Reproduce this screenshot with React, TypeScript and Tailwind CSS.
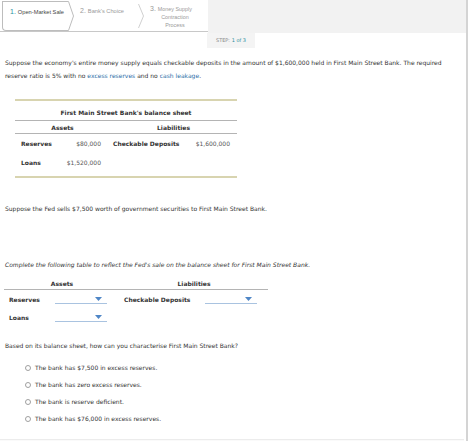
import React from "react";

function Dropdown() {
  return (
    <div className="flex h-[9px] w-[52px] items-center justify-end border-b border-[#a9c3e0] pr-[5px]">
      <svg width="7" height="4" viewBox="0 0 7 4">
        <path d="M0 0 L7 0 L3.5 4 Z" fill="#4f86c6" />
      </svg>
    </div>
  );
}

function Radio({ text }: { text: string }) {
  return (
    <div className="flex h-[17px] items-center gap-[4px]">
      <span className="h-[6px] w-[6px] rounded-full border border-[#a0a0a0] bg-white" />
      <span>{text}</span>
    </div>
  );
}

export default function App() {
  return (
    <div
      className="h-[441px] w-[468px] border-r-2 border-[#d4d4d4] bg-white text-[6px] text-[#333]"
      style={{ fontFamily: "'DejaVu Sans', Verdana, sans-serif" }}
    >
      {/* top step bar */}
      <div className="flex h-[33px]">
        <div
          className="flex h-[32px] w-[208px] border-b border-[#c8c8c8] pt-[1px] pl-[2px]"
          style={{ fontFamily: "'Liberation Sans', Arial, sans-serif" }}
        >
          <div className="flex h-[30px]">
            <div className="flex h-[30px] w-[65px] items-start gap-[2px] rounded-bl-[4px] border-y border-l border-[#bdbdbd] bg-white pl-[7px] pt-[6px] text-[5.7px] text-[#444]">
              <span className="text-[7px] leading-[7px] text-[#2a8f9e]">1.</span>
              <span className="leading-[8px]">Open-Market Sale</span>
            </div>
            <svg width="7" height="30" viewBox="0 0 7 30">
              <path d="M0 0.5 L1.5 0.5 L6.5 15 L1.5 29.5 L0 29.5" fill="white" stroke="#bdbdbd" strokeWidth="1" />
            </svg>
          </div>
          <div className="flex w-[64px] items-start gap-[2px] pl-[6px] pt-[6px] text-[5.7px] text-[#9a9a9a]">
            <span className="text-[7px] leading-[7px]">2.</span>
            <span className="leading-[8px]">Bank's Choice</span>
          </div>
          <svg className="mt-[3px]" width="6" height="24" viewBox="0 0 6 24">
            <path d="M0.5 0 L5.5 12 L0.5 24" fill="none" stroke="#c4c4c4" strokeWidth="0.8" />
          </svg>
          <div className="flex items-start gap-[2px] pl-[6px] pt-[4px] text-[5.4px] text-[#9a9a9a]">
            <span className="text-[7px] leading-[7px]">3.</span>
            <span className="flex flex-col items-center leading-[8px]">
              <span>Money Supply</span>
              <span>Contraction</span>
              <span>Process</span>
            </span>
          </div>
        </div>
        <div className="flex flex-1 flex-col">
          <div className="h-[33px] bg-[#f2f2f2]" />
        </div>
      </div>
      <div className="ml-[207px] flex h-[15px] w-[48px] items-center justify-center bg-[#f4f4f4] text-[5px] text-[#888]">
        STEP:&nbsp;<span className="text-[#2a8f9e]">1 of 3</span>
      </div>

      {/* intro */}
      <p className="w-[450px] pl-[5px] pt-[8px] leading-[13px]">
        Suppose the economy's entire money supply equals checkable deposits in the amount of $1,600,000 held in First
        Main Street Bank. The required reserve ratio is 5% with no{" "}
        <span className="text-[#2c6ea8]">excess reserves</span> and no{" "}
        <span className="text-[#2c6ea8]">cash leakage</span>.
      </p>

      {/* balance sheet */}
      <div className="ml-[15px] mt-[17px] w-[222px] border-y-2 border-[#d8d4b0]">
        <div className="flex h-[20px] items-center justify-center border-b border-[#b4b4b4] pt-[4px] font-bold">
          First Main Street Bank's balance sheet
        </div>
        <div className="flex h-[13px] items-center border-b border-[#b4b4b4] font-bold">
          <div className="w-[95px] text-center">Assets</div>
          <div className="flex-1 text-center">Liabilities</div>
        </div>
        <div className="flex h-[19px] items-center">
          <div className="w-[50px] pl-[6px] font-bold">Reserves</div>
          <div className="w-[36px] text-right text-[#555]">$80,000</div>
          <div className="w-[92px] pl-[12px] font-bold">Checkable Deposits</div>
          <div className="w-[37px] text-right text-[#555]">$1,600,000</div>
        </div>
        <div className="flex h-[19px] items-center">
          <div className="w-[50px] pl-[6px] font-bold">Loans</div>
          <div className="w-[36px] text-right text-[#555]">$1,520,000</div>
        </div>
        <div className="h-[4px]" />
      </div>

      <p className="pl-[5px] pt-[26px]">Suppose the Fed sells $7,500 worth of government securities to First Main Street Bank.</p>

      <p className="pl-[5px] pt-[47px] italic">
        Complete the following table to reflect the Fed's sale on the balance sheet for First Main Street Bank.
      </p>

      {/* answer table */}
      <div className="ml-[4px] mt-[11px] w-[264px]">
        <div className="flex h-[10px] items-center border-b border-[#b4b4b4] pb-[2px] font-bold">
          <div className="w-[116px] text-center">Assets</div>
          <div className="flex-1 text-center">Liabilities</div>
        </div>
        <div className="flex h-[18px] items-center">
          <div className="w-[51px] pl-[5px] font-bold">Reserves</div>
          <Dropdown />
          <div className="w-[98px] pl-[17px] font-bold">Checkable Deposits</div>
          <Dropdown />
        </div>
        <div className="flex h-[18px] items-center">
          <div className="w-[51px] pl-[5px] font-bold">Loans</div>
          <Dropdown />
        </div>
      </div>

      <p className="pl-[5px] pt-[15px]">Based on its balance sheet, how can you characterise First Main Street Bank?</p>

      <div className="pl-[25px] pt-[9px]">
        <Radio text="The bank has $7,500 in excess reserves." />
        <Radio text="The bank has zero excess reserves." />
        <Radio text="The bank is reserve deficient." />
        <Radio text="The bank has $76,000 in excess reserves." />
      </div>

      <div className="mt-[12px] h-[4px] w-[464px] border-t border-[#ececec] bg-[#fafafa]" />
    </div>
  );
}
